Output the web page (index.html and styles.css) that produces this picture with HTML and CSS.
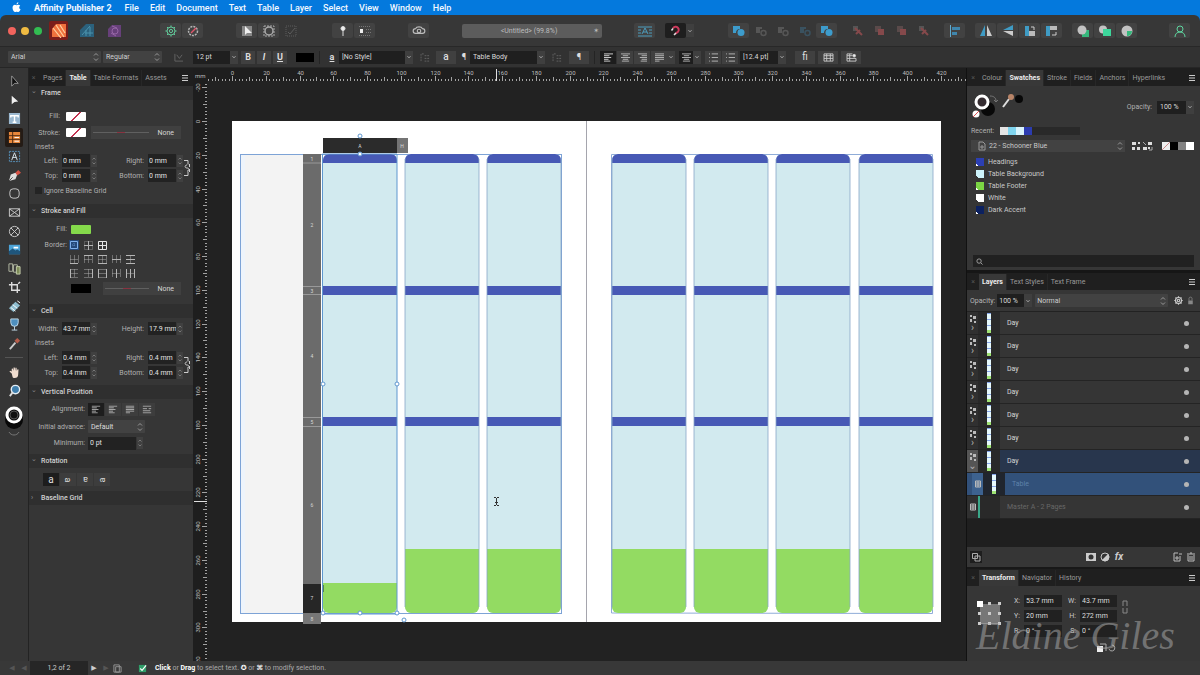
FILE: index.html
```html
<!DOCTYPE html>
<html lang="en">
<head>
<meta charset="utf-8">
<title>Affinity Publisher 2</title>
<link rel="stylesheet" href="styles.css">
</head>
<body>
<svg class="sprite" aria-hidden="true">
  <symbol id="gear" viewBox="0 0 12 12"><circle cx="6" cy="6" r="4"/><circle cx="6" cy="6" r="1.6"/><path d="M6 .4v1.6M6 10v1.6M.4 6H2M10 6h1.6M2 2l1.2 1.2M8.800 8.800 10 10M10 2 8.800 3.200M3.200 8.800 2 10"/></symbol>
  <symbol id="menu" viewBox="0 0 8 8"><path d="M1 1.500h6M1 4h6M1 6.500h6"/></symbol>
  <symbol id="spin" viewBox="0 0 6 10"><path d="M1.500 3.500 3 2l1.500 1.500M1.500 6.500 3 8l1.500-1.500"/></symbol>
  <symbol id="caret" viewBox="0 0 6 6"><path d="M1.500 2.200 3 3.800l1.500-1.600"/></symbol>
  <symbol id="link" viewBox="0 0 7 18"><path d="M0 1.500h4v4M0 16.500h4v-4M3 6c-2.500 0-2.500 3 0 3s2.500 3 0 3M5.500 5v3M5.500 10v3"/></symbol>
  <symbol id="bool" viewBox="0 0 14 12"><path d="M1 1h7v3h-1a4 4 0 0 0-3 4H1z" fill="currentColor"/><circle cx="9" cy="7.500" r="3.500" fill="currentColor"/></symbol>
  <symbol id="boolout" viewBox="0 0 14 12"><path d="M2 2h6v2H6v4H2z" fill="currentColor"/><circle cx="9.500" cy="8" r="2.500" stroke="currentColor" stroke-width="1.500"/></symbol>
  <symbol id="redx" viewBox="0 0 14 12"><path d="M2 1h5v5H2z" fill="#555"/><path d="M4 3l7 7M9 5l-4 4" stroke="currentColor" stroke-width="2"/></symbol>
  <symbol id="redbox" viewBox="0 0 14 12"><path d="M2 1h6v6H2z" fill="#5a4a4a"/><path d="M5 4h6v6H5z" fill="currentColor"/></symbol>
  <symbol id="lines-l" viewBox="0 0 12 10"><path d="M1 1h10M1 3h6M1 5h8M1 7h5M1 9h7"/></symbol>
  <symbol id="lines-c" viewBox="0 0 12 10"><path d="M1 1h10M3 3h6M1 5h10M3 7h6M2 9h8"/></symbol>
  <symbol id="lines-r" viewBox="0 0 12 10"><path d="M1 1h10M5 3h6M3 5h8M5 7h6M4 9h7"/></symbol>
  <symbol id="lines-j" viewBox="0 0 12 10"><path d="M1 1h10M1 3h10M1 5h10M1 7h10M1 9h5"/></symbol>
  <symbol id="lines-w" viewBox="0 0 12 10"><path d="M1 1h10M1 4h5M1 6.500h9M1 9h10M8 4h3"/></symbol>
  <symbol id="list" viewBox="0 0 12 10"><path d="M1 1h1M4 1h7M1 5h1M4 5h7M1 9h1M4 9h7"/></symbol>
  <symbol id="style" viewBox="0 0 12 10"><path d="M1 9V1h3M5 3h6M5 6h6M5 9h6" stroke-dasharray="2 1"/></symbol>
  <symbol id="b-out" viewBox="0 0 10 10"><path d="M1.500 1.500h7v7h-7z"/><path d="M3 5h4M5 3v4" stroke-dasharray="1 1" opacity=".6"/></symbol>
  <symbol id="b-in" viewBox="0 0 10 10"><path d="M5.500 1v9M1 5.500h9"/><path d="M1.500 1.500h8v8h-8z" stroke-dasharray="1 1" opacity=".6"/></symbol>
  <symbol id="b-all" viewBox="0 0 10 10"><path d="M1.500 1.500h8v8h-8zM5.500 1v8M1 5.500h8"/></symbol>
  <symbol id="b-h1" viewBox="0 0 10 10"><path d="M1 9.500h8"/><path d="M1.500 1v8M5.500 1v8M9.500 1v8M1 5.500h8" opacity=".45"/></symbol>
  <symbol id="b-h2" viewBox="0 0 10 10"><path d="M1 1.500h9"/><path d="M1.500 1v8M5.500 1v8M9.500 1v8M1 5.500h8" opacity=".45"/></symbol>
  <symbol id="b-h3" viewBox="0 0 10 10"><path d="M1 1.500h9M1 9.500h9"/><path d="M1.500 1v8M5.500 1v8M9.500 1v8M1 5.500h8" opacity=".45"/></symbol>
  <symbol id="b-h4" viewBox="0 0 10 10"><path d="M1 5.500h9"/><path d="M1.500 1v8M5.500 1v8M9.500 1v8" opacity=".45"/></symbol>
  <symbol id="b-h5" viewBox="0 0 10 10"><path d="M1 1.500h9M1 5.500h9M1 9.500h9"/><path d="M5.500 1v8" opacity=".45"/></symbol>
  <symbol id="b-v1" viewBox="0 0 10 10"><path d="M1.500 1v9"/><path d="M1 1.500h8M1 5.500h8M1 9.500h8M5.500 1v8" opacity=".45"/></symbol>
  <symbol id="b-v2" viewBox="0 0 10 10"><path d="M9.500 1v9"/><path d="M1 1.500h8M1 5.500h8M1 9.500h8M5.500 1v8" opacity=".45"/></symbol>
  <symbol id="b-v3" viewBox="0 0 10 10"><path d="M1.500 1v9M9.500 1v9"/><path d="M1 1.500h8M1 5.500h8M1 9.500h8" opacity=".45"/></symbol>
  <symbol id="b-v4" viewBox="0 0 10 10"><path d="M5.500 1v9"/><path d="M1.500 1v8M9.500 1v8M1 5.500h8" opacity=".45"/></symbol>
  <symbol id="b-v5" viewBox="0 0 10 10"><path d="M1.500 1v9M5.500 1v9M9.500 1v9"/><path d="M1 5.500h8" opacity=".45"/></symbol>
  <symbol id="nodes" viewBox="0 0 8 8"><path d="M1 0h2v2H1zM4 1h3v3H4zM1 4h2v3H1zM5 6h2v2H5z" fill="currentColor" stroke="none"/></symbol>
  <symbol id="grid" viewBox="0 0 8 8"><path d="M1.500 1h5v6h-5zM1.500 3h5M1.500 5h5M4 1v6"/></symbol>
  <symbol id="thumb" viewBox="0 0 6 20"><path d="M1 0h4v20H1z" fill="#e6f9fc"/><path d="M1 0h4v1H1zM1 6h4v1H1zM1 12h4v1H1z" fill="#86a4e8"/><path d="M1 17h4v3H1z" fill="#9fe374"/></symbol>
</svg>

<nav class="menubar" aria-label="Application menu">
  <svg class="apple" viewBox="0 0 10 12"><path d="M7 3c1 0 1.700.5 2.100 1-1.600 1-1.400 3.300.4 4-.5 1.500-1.400 3-2.500 3-.8 0-1-.4-1.900-.4s-1.200.4-1.900.4C1.800 11 .6 8.600.6 6.400.6 4.300 1.900 3 3.200 3c.8 0 1.400.5 1.900.5S6.200 3 7 3zM5 2.700C4.900 1.400 5.900.3 7 .2 7.200 1.500 6.200 2.700 5 2.700z" fill="#fff"/></svg>
  <a class="app" href="#">Affinity Publisher 2</a><a href="#">File</a><a href="#">Edit</a><a href="#">Document</a><a href="#">Text</a><a href="#">Table</a><a href="#">Layer</a><a href="#">Select</a><a href="#">View</a><a href="#">Window</a><a href="#">Help</a>
</nav>

<div class="window">
<header class="toolbar">
  <div class="lights"><button class="light red" aria-label="Close"></button><button class="light yellow" aria-label="Minimise"></button><button class="light green" aria-label="Zoom"></button></div>
  <div class="personas">
    <button class="tb persona on" aria-label="Publisher"><svg viewBox="0 0 14 14"><path d="M0 5 4 0h10v13H0z" fill="#f0713d"/><path d="M1 4l8 10M4 1l8 12M8 1l5 8" stroke="#ffd0a0" stroke-width="1.200"/></svg></button>
    <button class="tb persona" aria-label="Designer"><svg viewBox="0 0 14 14"><path d="M0 6 6 0h8v13H0z" fill="#2b617c"/><path d="M2 11 10 2M6 12V6M10 12V3M5 9h8" stroke="#4a93ad"/></svg></button>
    <button class="tb persona" aria-label="Photo"><svg viewBox="0 0 14 14"><path d="M0 5 4 1h9v12H0z" fill="#67407a"/><circle cx="7" cy="7" r="3" stroke="#9565a5"/><path d="M4 2l5 2M3 9l5 3" stroke="#9565a5"/></svg></button>
  </div>
  <div class="group g1">
    <button class="tb" aria-label="Preferences"><svg viewBox="0 0 12 12" stroke="#62c99a"><use href="#gear"/></svg></button>
    <button class="tb" aria-label="Preflight"><svg viewBox="0 0 12 12" stroke="#b5b5b5"><circle cx="6" cy="6" r="4.500" stroke-dasharray="2 1" stroke-width="1.500"/><path d="M4 8l5-5" stroke="#e0556a" stroke-width="1.500"/></svg></button>
  </div>
  <div class="group g2">
    <button class="tb" aria-label="Baseline grid"><svg viewBox="0 0 12 12"><path d="M1 1h10v10H1z" fill="#888"/><path d="M4 1v9l2-2h5z" fill="#eee"/></svg></button>
    <button class="tb" aria-label="Clip to canvas"><svg viewBox="0 0 12 12" stroke="#aaa"><path d="M1 1h10v10H1z" stroke-dasharray="2 1"/><circle cx="6" cy="6" r="4" stroke-width="1.500"/></svg></button>
    <button class="tb flat" aria-label="Preview"><svg viewBox="0 0 12 12" stroke="#5c5c5c"><path d="M1 1h10v10H1z" stroke-dasharray="1 1"/><path d="M3 7l2 2 5-6"/></svg></button>
  </div>
  <div class="group g3">
    <button class="tb" aria-label="Pin"><svg viewBox="0 0 12 12" stroke="#ddd"><circle cx="6" cy="3.500" r="2" fill="#eee"/><path d="M6 5v6"/></svg></button>
    <button class="tb" aria-label="Text wrap"><svg viewBox="0 0 14 12" stroke="#777"><path d="M1 1.500h12M8 4.500h5M8 7.500h5M1 10.500h12" stroke-dasharray="1 1"/><path d="M2 4h3v4H2z" fill="#eee" stroke="none"/></svg></button>
  </div>
  <button class="tb g4" aria-label="Resource manager"><svg viewBox="0 0 12 10" stroke="#bbb"><path d="M3 7a2 2 0 0 1 0-4c1-2 5-2 6 0a2 2 0 0 1 0 4z"/><circle cx="6" cy="5" r="1.500"/></svg></button>
  <button class="doc-title"><span>&lt;Untitled&gt; (99.8%)</span><i>✶</i></button>
  <button class="tb g5" aria-label="Baseline"><svg viewBox="0 0 14 12" stroke="#4c9dbd"><path d="M0 2h14M0 5h3M11 5h3M0 8h3M11 8h3M0 11h14M4 9l3-6 3 6M5 7h4"/></svg></button>
  <button class="tb black g6" aria-label="Snapping"><svg viewBox="0 0 12 12"><path d="M3 3.500a3 3 0 1 1 4 4L5 9" stroke="#cc3a5c" stroke-width="2"/><path d="M1.500 5.500 3 3.500M4 10l2-2" stroke="#ddd" stroke-width="1.500"/></svg></button><button class="drop" aria-label="Snapping options"><svg viewBox="0 0 6 6" stroke="#aaa"><use href="#caret"/></svg></button>
  <div class="group g7">
    <button class="tb blue" aria-label="Add"><svg viewBox="0 0 14 12"><use href="#bool"/></svg></button>
    <button class="tb flat" aria-label="Subtract"><svg viewBox="0 0 14 12"><use href="#boolout"/></svg></button>
    <button class="tb flat" aria-label="Intersect"><svg viewBox="0 0 14 12"><use href="#boolout"/></svg></button>
    <button class="tb flat dimblue" aria-label="Divide"><svg viewBox="0 0 14 12"><use href="#boolout"/></svg></button>
    <button class="tb blue" aria-label="Combine"><svg viewBox="0 0 14 12"><use href="#bool"/></svg></button>
  </div>
  <div class="group g8">
    <button class="tb flat dimred" aria-label="Back"><svg viewBox="0 0 14 12"><use href="#redx"/></svg></button>
    <button class="tb flat dimred" aria-label="Back one"><svg viewBox="0 0 14 12"><use href="#redbox"/></svg></button>
    <button class="tb flat dimred" aria-label="Forward one"><svg viewBox="0 0 14 12"><use href="#redbox"/></svg></button>
    <button class="tb flat dimred" aria-label="Front"><svg viewBox="0 0 14 12"><use href="#redx"/></svg></button>
  </div>
  <button class="tb g9" aria-label="Alignment"><svg viewBox="0 0 12 12"><path d="M1.500 0v12" stroke="#62acd0"/><path d="M3 2h8v3H3zM3 7h5v3H3z" fill="#3f86ad"/></svg></button>
  <div class="group g10">
    <button class="tb" aria-label="Flip horizontal"><svg viewBox="0 0 14 12"><path d="M6 0v11H1z" fill="#3f9bc4"/><path d="M8 0v11h5z" fill="#ccc"/></svg></button>
    <button class="tb" aria-label="Flip vertical"><svg viewBox="0 0 14 12"><path d="M12 0v5H2z" fill="#3f9bc4"/><path d="M12 11V6H2z" fill="#ccc"/></svg></button>
    <button class="tb" aria-label="Rotate left"><svg viewBox="0 0 14 12"><path d="M2 1h4v10H2z" fill="#3f9bc4"/><path d="M6 6h6v5H6z" fill="#bbb"/><path d="M8 2h3v3" stroke="#ccc"/></svg></button>
    <button class="tb" aria-label="Rotate right"><svg viewBox="0 0 14 12"><path d="M1 1h4v10H1z" fill="#3f9bc4"/><path d="M5 1h7v4H5z" fill="#bbb"/><path d="M7 10h4V7" stroke="#ccc"/></svg></button>
  </div>
  <div class="group g11">
    <button class="tb" aria-label="Insert behind"><svg viewBox="0 0 14 12"><path d="M6 5h7v7H6z" fill="#35b87c"/><circle cx="6" cy="5" r="4.500" fill="#c2c2c2"/></svg></button>
    <button class="tb" aria-label="Insert in front"><svg viewBox="0 0 14 12"><circle cx="5" cy="4.500" r="4" fill="#c2c2c2"/><path d="M5 4h8v7H5z" fill="#3dd69b"/></svg></button>
    <button class="tb" aria-label="Insert inside"><svg viewBox="0 0 14 12"><circle cx="7" cy="6" r="5.500" fill="#c2c2c2"/><path d="M7 6h5c0 3-2 5-5 5z" fill="#35b87c"/></svg></button>
  </div>
  <button class="tb account" aria-label="Account"><svg viewBox="0 0 12 12" stroke="#5fd6a0"><circle cx="6" cy="4" r="3"/><path d="M1 12c0-3 2-5 5-5s5 2 5 5"/></svg></button>
</header>

<div class="contextbar">
  <select class="pick font" aria-label="Font"><option>Arial</option></select>
  <select class="pick weight" aria-label="Font style"><option>Regular</option></select>
  <button class="cb bare c1" aria-label="Text frame"><svg viewBox="0 0 12 10" stroke="#666"><path d="M2 1v8h9M4 2l3 4 3-4"/></svg></button>
  <input class="dark size" aria-label="Font size" value="12 pt"><button class="drop" aria-label="Sizes"><svg viewBox="0 0 6 6" stroke="#aaa"><use href="#caret"/></svg></button>
  <button class="cb bold">B</button><button class="cb italic">I</button><button class="cb under">U</button>
  <button class="blackswatch" aria-label="Text colour"></button>
  <span class="rule"></span>
  <button class="cb bare under c3">a</button>
  <input class="dark nostyle" aria-label="Character style" value="[No Style]"><button class="drop" aria-label="Character styles"><svg viewBox="0 0 6 6" stroke="#aaa"><use href="#caret"/></svg></button>
  <button class="cb bare c4" aria-label="Update style"><svg viewBox="0 0 12 10" stroke="#666"><use href="#style"/></svg></button>
  <button class="cb wide c5">a</button>
  <button class="cb bare c6">¶</button>
  <input class="dark body" aria-label="Paragraph style" value="Table Body"><button class="drop" aria-label="Paragraph styles"><svg viewBox="0 0 6 6" stroke="#aaa"><use href="#caret"/></svg></button>
  <button class="cb bare c4" aria-label="Update paragraph style"><svg viewBox="0 0 12 10" stroke="#666"><use href="#style"/></svg></button>
  <button class="cb wide c7">¶</button>
  <span class="rule"></span>
  <div class="aligns">
    <button class="cb pressed" aria-label="Align left"><svg viewBox="0 0 12 10" stroke="#ddd"><use href="#lines-l"/></svg></button>
    <button class="cb" aria-label="Align centre"><svg viewBox="0 0 12 10" stroke="#bbb"><use href="#lines-c"/></svg></button>
    <button class="cb" aria-label="Align right"><svg viewBox="0 0 12 10" stroke="#bbb"><use href="#lines-r"/></svg></button>
    <button class="cb" aria-label="Justify"><svg viewBox="0 0 12 10" stroke="#bbb"><use href="#lines-j"/></svg></button>
  </div>
  <button class="drop" aria-label="Justify options"><svg viewBox="0 0 6 6" stroke="#aaa"><use href="#caret"/></svg></button>
  <button class="cb pressed c8" aria-label="Vertical align"><svg viewBox="0 0 12 10" stroke="#bbb"><use href="#lines-c"/></svg></button><button class="drop" aria-label="Vertical options"><svg viewBox="0 0 6 6" stroke="#aaa"><use href="#caret"/></svg></button>
  <div class="aligns c9">
    <button class="cb" aria-label="Bullets"><svg viewBox="0 0 12 10" stroke="#bbb"><use href="#list"/></svg></button>
    <button class="cb" aria-label="Numbering"><svg viewBox="0 0 12 10" stroke="#bbb"><use href="#list"/></svg></button>
  </div>
  <input class="dark leading" aria-label="Leading" value="[12.4 pt]"><button class="drop" aria-label="Leading options"><svg viewBox="0 0 6 6" stroke="#aaa"><use href="#caret"/></svg></button>
  <button class="cb wide c10">fi</button>
  <button class="cb wide c11" aria-label="Table"><svg viewBox="0 0 12 10" stroke="#ccc"><path d="M1 1h10v8H1zM1 3h10M1 6h10M4 1v8M8 1v8"/></svg></button>
  <button class="cb wide c11" aria-label="Table settings"><svg viewBox="0 0 12 10" stroke="#ccc"><path d="M7 1H1v8h10V6M1 3h6M1 6h10M4 1v8"/><circle cx="9" cy="3" r="1.500" fill="#eee"/></svg></button>
</div>

<main class="workspace">
<aside class="tools" aria-label="Tools">
  <div class="toolset">
  <button aria-label="Move"><svg viewBox="0 0 14 14"><path d="M4 1v11l3-3h4z" fill="#111" stroke="#999"/></svg></button>
  <button aria-label="Node"><svg viewBox="0 0 14 14"><path d="M4 2v9l3-2.500 4-.5z" fill="#eee"/></svg></button>
  <button aria-label="Frame text"><svg viewBox="0 0 14 14"><path d="M1 1h12v12H1z" fill="#9bb8cf"/><path d="M3 6V4h8v2M7 4v7M5 11h4" stroke="#fff" stroke-width="1.500"/></svg></button>
  <button class="active" aria-label="Table tool"><svg viewBox="0 0 14 14"><path d="M1 1h12v12H1z" fill="#e8873a"/><path d="M1 5h12M1 9h12M5 1v12" stroke="#4a2a14"/><path d="M7 7h5M7 11h5" stroke="#fff"/></svg></button>
  <button aria-label="Artistic text"><svg viewBox="0 0 14 14" stroke="#5794bf"><path d="M1.500 1.500h11v11h-11z" stroke-dasharray="2 1"/><path d="M4 11 7 3l3 8M5 8h4" stroke="#d9e6ee"/></svg></button>
  <button aria-label="Pen"><svg viewBox="0 0 14 14"><path d="M1 13 3 6l5-2 2 2-2 5z" fill="#ddd"/><path d="m8 4 3-3 3 3-4 3z" fill="#d65245"/><path d="m1 13 4-4" stroke="#444"/></svg></button>
  <button aria-label="Rounded rectangle"><svg viewBox="0 0 14 14" stroke="#ccc"><rect x="2" y="2" width="10" height="10" rx="3.500"/></svg></button>
  <button aria-label="Picture frame rectangle"><svg viewBox="0 0 14 14" stroke="#ccc"><path d="M1.500 3h11v8h-11zM1.500 3l11 8M12.500 3l-11 8"/></svg></button>
  <button aria-label="Picture frame ellipse"><svg viewBox="0 0 14 14" stroke="#ccc"><circle cx="7" cy="7" r="5.500"/><path d="m3 3 8 8M11 3l-8 8"/></svg></button>
  <button aria-label="Place image"><svg viewBox="0 0 14 14"><path d="M1 2h12v10H1z" fill="#4ba3d8"/><path d="M1 9l4-3 3 2 2-1 3 2v3H1z" fill="#1f567c"/><path d="M6 5h5" stroke="#fff" stroke-width="2"/></svg></button>
  <button aria-label="Data merge"><svg viewBox="0 0 14 14"><path d="M1 2h4v8H1zM6 3h4v8H6z" stroke="#b5bba5"/><path d="M9 5h4v8H9z" fill="#7d8b57" stroke="#c7cfae"/></svg></button>
  <button aria-label="Crop"><svg viewBox="0 0 14 14" stroke="#ddd" stroke-width="1.500"><path d="M4 1v9h9M1 4h9v9M11 3l2-2"/></svg></button>
  <button aria-label="Fill"><svg viewBox="0 0 14 14"><path d="m1 9 7-7 5 4-7 7z" fill="#8fbdcf"/><path d="m3 8 5 4M5 5l5 4M10 1l3 2" stroke="#fff"/></svg></button>
  <button aria-label="Transparency"><svg viewBox="0 0 14 14"><path d="M3 1h8v4a4 4 0 0 1-8 0z" fill="#4e8fbe"/><path d="M3 1h8v4a4 4 0 0 1-8 0zM7 9v4M4 13h6" stroke="#c3dbe9"/></svg></button>
  <button aria-label="Colour picker"><svg viewBox="0 0 14 14"><path d="m2 13 6-7" stroke="#ccc" stroke-width="2"/><path d="m7 4 3-3 3 3-3 3z" fill="#b55d4b"/></svg></button>
  </div>
  <hr>
  <button aria-label="Hand"><svg viewBox="0 0 14 14"><path d="M4 8 1.500 6l1-1L4 6V3l1.200-.2L6 5V1.500h1.200L8 5V2h1.200l.3 3.500.8-2 1 .3L11 9c0 3-1.500 4-4 4S5 11 4 8z" fill="#f0ddd0"/></svg></button>
  <button aria-label="Zoom tool"><svg viewBox="0 0 14 14"><circle cx="8" cy="6" r="4.500" fill="#3f7fae" stroke="#e5eef5" stroke-width="1.500"/><path d="m5 9-3 4" stroke="#ddd" stroke-width="2"/></svg></button>
  <svg class="stroke-fill" viewBox="0 0 20 34"><circle cx="10" cy="16" r="9" fill="#080808"/><circle cx="10" cy="11" r="7" fill="#111" stroke="#fff" stroke-width="3"/><circle cx="10" cy="11" r="4" stroke="#555"/><path d="M5 28c2 4 8 4 10 0" stroke="#777"/></svg>
</aside>

<aside class="panel left">
  <div class="tabs"><span class="grip">×</span><button class="tab">Pages</button><button class="tab on">Table</button><button class="tab">Table Formats</button><button class="tab">Assets</button><button class="burger" aria-label="Panel menu"><svg viewBox="0 0 8 8"><use href="#menu"/></svg></button></div>

  <h2>Frame</h2>
  <section class="frame">
    <div class="row r16"><span class="lab">Fill:</span><button class="nofill" aria-label="No fill"></button></div>
    <div class="row r17"><span class="lab">Stroke:</span><button class="nofill" aria-label="No stroke"></button><button class="strokebox"><i></i>None</button></div>
    <p class="sub r12">Insets</p>
    <div class="insets">
      <label for="fl">Left:</label><input id="fl" value="0 mm"><svg class="spin" viewBox="0 0 6 10"><use href="#spin"/></svg>
      <label for="fr">Right:</label><input id="fr" value="0 mm"><svg class="spin" viewBox="0 0 6 10"><use href="#spin"/></svg>
      <label for="ft">Top:</label><input id="ft" value="0 mm"><svg class="spin" viewBox="0 0 6 10"><use href="#spin"/></svg>
      <label for="fb">Bottom:</label><input id="fb" value="0 mm"><svg class="spin" viewBox="0 0 6 10"><use href="#spin"/></svg>
      <svg class="chain" viewBox="0 0 7 18"><use href="#link"/></svg>
    </div>
    <label class="check"><input type="checkbox">Ignore Baseline Grid</label>
  </section>

  <h2>Stroke and Fill</h2>
  <section class="strokefill">
    <div class="row r18"><span class="lab">Fill:</span><button class="greenfill" aria-label="Green fill"></button></div>
    <div class="row r14"><span class="lab">Border:</span><div class="borders"><button class="on" aria-label="Outside"><svg viewBox="0 0 10 10"><use href="#b-out"/></svg></button><button aria-label="Inside"><svg viewBox="0 0 10 10"><use href="#b-in"/></svg></button><button class="lit" aria-label="All"><svg viewBox="0 0 10 10"><use href="#b-all"/></svg></button></div></div>
    <div class="row r14"><span class="lab"></span><div class="borders"><button aria-label="Bottom edge"><svg viewBox="0 0 10 10"><use href="#b-h1"/></svg></button><button aria-label="Top edge"><svg viewBox="0 0 10 10"><use href="#b-h2"/></svg></button><button aria-label="Top and bottom"><svg viewBox="0 0 10 10"><use href="#b-h3"/></svg></button><button aria-label="Middle row"><svg viewBox="0 0 10 10"><use href="#b-h4"/></svg></button><button aria-label="All rows"><svg viewBox="0 0 10 10"><use href="#b-h5"/></svg></button></div></div>
    <div class="row r14"><span class="lab"></span><div class="borders"><button aria-label="Left edge"><svg viewBox="0 0 10 10"><use href="#b-v1"/></svg></button><button aria-label="Right edge"><svg viewBox="0 0 10 10"><use href="#b-v2"/></svg></button><button aria-label="Left and right"><svg viewBox="0 0 10 10"><use href="#b-v3"/></svg></button><button aria-label="Middle column"><svg viewBox="0 0 10 10"><use href="#b-v4"/></svg></button><button aria-label="All columns"><svg viewBox="0 0 10 10"><use href="#b-v5"/></svg></button></div></div>
    <div class="row r17"><span class="lab"></span><button class="blackfill" aria-label="Stroke colour"></button><button class="strokebox narrow"><i></i>None</button></div>
  </section>

  <h2>Cell</h2>
  <section class="cell">
    <div class="insets">
      <label for="cw">Width:</label><input id="cw" value="43.7 mm"><svg class="spin" viewBox="0 0 6 10"><use href="#spin"/></svg>
      <label for="ch">Height:</label><input id="ch" value="17.9 mm"><svg class="spin" viewBox="0 0 6 10"><use href="#spin"/></svg>
    </div>
    <p class="sub r14">Insets</p>
    <div class="insets">
      <label for="cl">Left:</label><input id="cl" value="0.4 mm"><svg class="spin" viewBox="0 0 6 10"><use href="#spin"/></svg>
      <label for="cr">Right:</label><input id="cr" value="0.4 mm"><svg class="spin" viewBox="0 0 6 10"><use href="#spin"/></svg>
      <label for="ct">Top:</label><input id="ct" value="0.4 mm"><svg class="spin" viewBox="0 0 6 10"><use href="#spin"/></svg>
      <label for="cb">Bottom:</label><input id="cb" value="0.4 mm"><svg class="spin" viewBox="0 0 6 10"><use href="#spin"/></svg>
      <svg class="chain" viewBox="0 0 7 18"><use href="#link"/></svg>
    </div>
  </section>

  <h2>Vertical Position</h2>
  <section class="vertical">
    <div class="row r18"><span class="lab">Alignment:</span><div class="four"><button class="pressed" aria-label="Top"><svg viewBox="0 0 12 10"><use href="#lines-l"/></svg></button><button aria-label="Centre"><svg viewBox="0 0 12 10"><use href="#lines-l"/></svg></button><button aria-label="Bottom"><svg viewBox="0 0 12 10"><use href="#lines-j"/></svg></button><button aria-label="Justified"><svg viewBox="0 0 12 10"><use href="#lines-w"/></svg></button></div></div>
    <div class="row r17"><label class="lab" for="adv">Initial advance:</label><select id="adv" class="pick adv"><option>Default</option></select></div>
    <div class="row r16"><label class="lab" for="min">Minimum:</label><input id="min" value="0 pt"><svg class="spin" viewBox="0 0 6 10"><use href="#spin"/></svg></div>
  </section>

  <h2>Rotation</h2>
  <section class="rotation"><button class="pressed">a</button><button><span class="q1">a</span></button><button><span class="q2">a</span></button><button><span class="q3">a</span></button></section>

  <h2 class="closed">Baseline Grid</h2>
</aside>

<section class="view" aria-label="Document">
  <svg class="ruler-h" id="rulerH"><text class="unit" x="2" y="10">mm</text></svg>
  <svg class="ruler-v" id="rulerV"></svg>
  <svg class="canvas">
    <defs>
      <clipPath id="round"><rect x="0" y="0" width="74" height="459" rx="6"/></clipPath>
      <g id="col"><g clip-path="url(#round)"><rect width="74" height="459" fill="#d2eaef"/><rect width="74" height="9" fill="#4759b5"/><rect y="132" width="74" height="9" fill="#4759b5"/><rect y="263" width="74" height="9" fill="#4759b5"/></g></g>
      <g id="day"><use href="#col"/><rect y="395" width="74" height="64" fill="#93db62" clip-path="url(#round)"/><path d="M0 5v448M74 5v448" stroke="#88a6c8" stroke-width=".8"/></g>
    </defs>
    <g transform="translate(-207 -81)">
      <rect x="232" y="121" width="709" height="501" fill="#fff"/>
      <path d="M586.500 121v501" stroke="#a5a5ad"/>
      <rect x="240.500" y="154.500" width="321" height="459" stroke="#7da3d6"/>
      <rect x="241" y="155" width="62" height="458" fill="#eef4fb"/>
      <rect x="245" y="155" width="58" height="458" fill="#f3f3f3"/>
      <path d="M611.500 613V154.500h321V613.500z" stroke="#8facd8"/>
      <g transform="translate(323 154)"><use href="#col"/><rect y="429" width="74" height="30" fill="#93db62" clip-path="url(#round)"/></g>
      <path d="M322.500 154h74.500v460h-74.500z" stroke="#5f97cf"/>
      <use href="#day" x="405" y="154"/><use href="#day" x="487" y="154"/>
      <use href="#day" x="612" y="154"/><use href="#day" x="694" y="154"/><use href="#day" x="776" y="154"/><use href="#day" x="859" y="154"/>
      <rect x="303" y="154" width="18" height="470" fill="#6b6b6b"/>
      <rect x="303" y="584" width="18" height="29" fill="#262626"/>
      <path d="M303 163h18M303 286.500h18M303 294.500h18M303 417.500h18M303 426.500h18" stroke="#a5a5a5" stroke-width=".8"/>
      <rect x="303" y="613" width="18" height="11" fill="#777"/>
      <rect x="323" y="138" width="74" height="15" fill="#2b2b2b"/>
      <rect x="397" y="138" width="11" height="15" fill="#747474"/>
      <g class="marks"><text x="360" y="148">A</text><text x="402" y="148">H</text><text x="312" y="161">1</text><text x="312" y="227">2</text><text x="312" y="293">3</text><text x="312" y="358">4</text><text x="312" y="424">5</text><text x="312" y="507">6</text><text x="312" y="600">7</text><text x="312" y="621">8</text></g>
      <path d="M323.500 585v7" stroke="#4a6a4a" stroke-width=".8"/>
      <g fill="#fff" stroke="#5f97cf"><circle cx="360" cy="136" r="2"/><circle cx="360" cy="154" r="2"/><circle cx="323" cy="384" r="2"/><circle cx="397" cy="384" r="2"/><circle cx="323" cy="613" r="2"/><circle cx="360" cy="613" r="2"/><circle cx="397" cy="613" r="2"/><circle cx="404" cy="620" r="2"/></g>
      <path d="M494 497.500h2M497 497.500h2M494 505.500h2M497 505.500h2M496.500 498v7M495 502.500h3" stroke="#333"/>
    </g>
  </svg>
</section>

<aside class="panel right">
  <div class="tabs"><span class="grip">×</span><button class="tab">Colour</button><button class="tab on">Swatches</button><button class="tab">Stroke</button><button class="tab">Fields</button><button class="tab">Anchors</button><button class="tab">Hyperlinks</button><button class="burger" aria-label="Panel menu"><svg viewBox="0 0 8 8"><use href="#menu"/></svg></button></div>
  <section class="swatches">
    <div class="picker">
      <svg viewBox="3 0 56 28"><circle cx="20" cy="16" r="7" fill="#080808"/><circle cx="14" cy="9" r="6" fill="#342c30" stroke="#fff" stroke-width="3"/><circle cx="8" cy="21" r="3.500" fill="#fff"/><path d="m5 24 6-6" stroke="#d55"/><path d="M22 3c4 0 6 2 6 5M26 7l2 2 2-2" stroke="#777"/><path d="m35 14 6-8" stroke="#ddd" stroke-width="2"/><circle cx="43" cy="4" r="3" fill="#b88468"/><circle cx="51" cy="6" r="4" fill="#080808"/></svg>
      <label class="grow-label" for="sop">Opacity:</label><input id="sop" class="dark op" value="100 %"><button class="drop" aria-label="Opacity options"><svg viewBox="0 0 6 6" stroke="#aaa"><use href="#caret"/></svg></button>
    </div>
    <div class="recent"><span>Recent:</span><i class="k-grey"></i><i class="k-cyan"></i><i class="k-pale"></i><i class="k-blue"></i><b></b></div>
    <div class="palette">
      <div class="palette-pick"><svg viewBox="0 0 8 10" stroke="#999"><path d="M1 1h4l2 2v6H1zM3 5h2v2H3z"/></svg><select class="pick" aria-label="Palette"><option>22 - Schooner Blue</option></select></div>
      <svg class="views" viewBox="0 0 22 10"><path d="M1 1h4v3H1zM7 1h2v2H7zM1 6h3v3H1zM6 6h3v3H6zM17 1h4v3h-4zM12 6h4v3h-4zM17 6h2v2h-2z" fill="#ddd"/><path d="m12 1 3 3M18 9h3V6" stroke="#aaa"/></svg>
      <div class="basic"><i class="k-none"></i><i class="k-black"></i><i class="k-mid"></i><i class="k-white"></i></div>
    </div>
    <ul class="names">
      <li><i class="n1"></i>Headings</li><li><i class="n2"></i>Table Background</li><li><i class="n3"></i>Table Footer</li><li><i class="n4"></i>White</li><li><i class="n5"></i>Dark Accent</li>
    </ul>
    <label class="search"><svg viewBox="0 0 8 8" stroke="#aaa"><circle cx="3.500" cy="3.500" r="2.500"/><path d="m5.500 5.500 2 2"/></svg><input type="search" aria-label="Search swatches"></label>
  </section>

  <div class="tabs layers-tabs"><span class="grip">×</span><button class="tab on">Layers</button><button class="tab">Text Styles</button><button class="tab">Text Frame</button><button class="burger" aria-label="Panel menu"><svg viewBox="0 0 8 8"><use href="#menu"/></svg></button></div>
  <div class="layer-opts"><label for="lop">Opacity:</label><input id="lop" class="dark" value="100 %"><button class="drop" aria-label="Opacity options"><svg viewBox="0 0 6 6" stroke="#aaa"><use href="#caret"/></svg></button><select class="pick" aria-label="Blend mode"><option>Normal</option></select><button class="ico" aria-label="Blend options"><svg viewBox="0 0 12 12" stroke="#ccc" stroke-width="1.500"><use href="#gear"/></svg></button><button class="ico" aria-label="Lock"><svg viewBox="0 0 12 12"><path d="M3 6h6v5H3z" fill="#888"/><path d="M4 6V3c0-2 4-2 4 0v3" stroke="#888"/></svg></button></div>
  <ul class="layers">
    <li><span class="kind"><svg viewBox="0 0 8 8"><use href="#nodes"/></svg>›</span><svg class="thumb" viewBox="0 0 6 20"><use href="#thumb"/></svg><span class="name">Day</span><i></i></li>
    <li><span class="kind"><svg viewBox="0 0 8 8"><use href="#nodes"/></svg>›</span><svg class="thumb" viewBox="0 0 6 20"><use href="#thumb"/></svg><span class="name">Day</span><i></i></li>
    <li><span class="kind"><svg viewBox="0 0 8 8"><use href="#nodes"/></svg>›</span><svg class="thumb" viewBox="0 0 6 20"><use href="#thumb"/></svg><span class="name">Day</span><i></i></li>
    <li><span class="kind"><svg viewBox="0 0 8 8"><use href="#nodes"/></svg>›</span><svg class="thumb" viewBox="0 0 6 20"><use href="#thumb"/></svg><span class="name">Day</span><i></i></li>
    <li><span class="kind"><svg viewBox="0 0 8 8"><use href="#nodes"/></svg>›</span><svg class="thumb" viewBox="0 0 6 20"><use href="#thumb"/></svg><span class="name">Day</span><i></i></li>
    <li><span class="kind"><svg viewBox="0 0 8 8"><use href="#nodes"/></svg>›</span><svg class="thumb" viewBox="0 0 6 20"><use href="#thumb"/></svg><span class="name">Day</span><i></i></li>
    <li class="parent"><span class="kind"><svg viewBox="0 0 8 8"><use href="#nodes"/></svg>⌄</span><svg class="thumb" viewBox="0 0 6 20"><use href="#thumb"/></svg><span class="name">Day</span><i></i></li>
    <li class="selected"><span class="kind"><svg viewBox="0 0 8 8"><use href="#grid"/></svg></span><svg class="thumb" viewBox="0 0 6 20"><use href="#thumb"/></svg><span class="name">Table</span><i></i></li>
    <li class="master"><span class="kind"><svg viewBox="0 0 8 8"><use href="#grid"/></svg></span><span class="thumb"></span><span class="name">Master A - 2 Pages</span><i></i></li>
  </ul>
  <div class="layer-space"></div>
  <div class="layer-bar">
    <button class="black" aria-label="Edit all layers"><svg viewBox="0 0 10 10" stroke="#aaa"><path d="M1.500 1.500h5v5h-5zM4 4h5v5H4z"/></svg></button>
    <span class="push"></span>
    <button aria-label="Mask"><svg viewBox="0 0 10 10"><path d="M0 1h10v8H0z" fill="#ccc"/><circle cx="5" cy="5" r="2.500" fill="#333"/></svg></button>
    <button aria-label="Adjustment"><svg viewBox="0 0 10 10"><circle cx="5" cy="5" r="4" stroke="#ccc"/><path d="M8 2a4 4 0 0 1-6 6z" fill="#ccc"/></svg></button>
    <button class="fx">fx</button>
    <button class="add" aria-label="Add layer"><svg viewBox="0 0 10 10" stroke="#bbb"><path d="M6 1H2v8h6V4M7 2h3M4 5h2v2H4z"/></svg></button>
    <button aria-label="Delete"><svg viewBox="0 0 10 10" stroke="#bbb"><path d="M1 2h8M4 1h2M2 3v6h6V3M4 4v4M6 4v4"/></svg></button>
  </div>

  <div class="tabs transform-tabs"><span class="grip">×</span><button class="tab on">Transform</button><button class="tab">Navigator</button><button class="tab">History</button><button class="burger" aria-label="Panel menu"><svg viewBox="0 0 8 8"><use href="#menu"/></svg></button></div>
  <section class="transform">
    <svg class="anchor" viewBox="0 0 28 30"><path d="M4 4h20v20H4z" fill="#777"/><path d="M1 1h6v6H1zM12 2h3v3h-3zM22 2h3v3h-3zM2 12h3v3H2zM12 12h3v3h-3zM22 12h3v3h-3zM2 22h3v3H2zM12 22h3v3h-3zM22 22h3v3h-3z" fill="#ccc"/><path d="M1 1h6v6H1z" fill="#fff"/></svg>
    <div class="coords">
      <label for="tx">X:</label><input id="tx" value="53.7 mm"><label for="tw">W:</label><input id="tw" value="43.7 mm">
      <label for="ty">Y:</label><input id="ty" value="20 mm"><label for="th">H:</label><input id="th" value="272 mm">
      <label for="tr">R:</label><input id="tr" value="0 °"><label for="ts">S:</label><input id="ts" value="0 °">
    </div>
    <svg class="lock" viewBox="0 0 6 14" stroke="#888"><path d="M1 6V1h4v5M1 8v5h4V8"/></svg>
    <svg class="cycle" viewBox="0 0 20 10"><path d="M0 3h6v6H0z" fill="#eee"/><path d="M3 1h6v7M12 6a3 3 0 1 0 3-4" stroke="#aaa"/></svg>
    <p class="watermark">Elaine Giles</p>
  </section>
</aside>
</main>

<footer class="status">
  <button class="nav dimmed" aria-label="First page">◀</button><button class="nav dimmed" aria-label="Previous page">◀</button>
  <button class="pages">1,2 of 2</button>
  <button class="nav" aria-label="Next page">▶</button><button class="nav dimmed" aria-label="Last page">▶</button>
  <svg class="st" viewBox="0 0 10 10" stroke="#999"><path d="M1 1h6v8H1zM3 3h6v6H3z"/></svg>
  <svg class="st ok" viewBox="0 0 10 10"><path d="M1 1h8v8H1z" fill="#2f9c68"/><path d="m2.500 5 2 2L9 1.500" stroke="#fff" stroke-width="1.300"/></svg>
  <p><b>Click</b> or <b>Drag</b> to select text. <b>✪</b> or <b>⌘</b> to modify selection.</p>
</footer>
</div>
<script src="rulers.js"></script>
</body>
</html>
```

FILE: styles.css
```css
* { box-sizing: border-box; }
html, body { height: 100%; }
body {
  margin: 0;
  display: flex;
  flex-direction: column;
  background: #0479dd;
  color: #c8c8c8;
  font: 7px/10px Roboto, "DejaVu Sans", sans-serif;
  overflow: hidden;
}
svg { fill: none; flex: none; display: block; }
button, input, select {
  font: inherit;
  color: inherit;
  border: 0;
  margin: 0;
  padding: 0;
  background: none;
  appearance: none;
  min-width: 0;
  border-radius: 0;
}
button { display: flex; align-items: center; justify-content: center; flex: none; }
h2, p, ul { margin: 0; padding: 0; font: inherit; list-style: none; }
.sprite { position: absolute; width: 0; height: 0; }

.menubar { display: flex; align-items: center; height: 15px; flex: none; gap: 11px; padding-left: 12px; font-size: 9px; font-weight: 500; }
.menubar a { color: #f2f8ff; text-decoration: none; }
.menubar .app { font-weight: 700; margin: 0 2px; }
.apple { width: 9px; height: 11px; }

.window { flex: 1; min-height: 0; display: flex; flex-direction: column; background: #373737; border-radius: 6px 6px 0 0; overflow: hidden; }

.toolbar { display: flex; align-items: center; height: 32px; flex: none; padding-right: 10px; border-bottom: 1px solid #282828; }
.lights { display: flex; gap: 4px; margin-left: 8px; }
.light { width: 8px; height: 8px; border-radius: 50%; margin-right: 1px; }
.red { background: #f2645d; }
.yellow { background: #f0bb42; }
.green { background: #32bd52; }
.personas { display: flex; gap: 9px; margin-left: 6px; }
.tb { width: 21px; height: 15px; background: #424242; border-radius: 2px; }
.tb svg { width: 14px; height: 12px; }
.persona { width: 19px; height: 19px; background: none; }
.persona.on { background: #7c1d1a; }
.persona svg { width: 14px; height: 14px; }
.group { display: flex; gap: 1px; }
.flat { background: none; color: #565656; }
.black, .tb.black { background: #1e1e1e; }
.blue { color: #3d9ccc; }
.dimblue { color: #3a5260; }
.dimred { color: #85494b; }
.g1 { margin-left: 36px; }
.g2 { margin-left: 33px; }
.g3 { margin-left: 31px; }
.g4 { margin-left: 33px; }
.doc-title { width: 140px; height: 14px; margin-left: 33px; background: #5c5c5c; border-radius: 2px; color: #bcbcbc; padding: 0 3px; }
.doc-title span { flex: 1; }
.doc-title i { font-style: normal; }
.g5 { margin-left: 32px; }
.g6 { margin-left: 10px; }
.g7 { margin-left: 34px; }
.g8 { margin-left: 10px; }
.g9 { margin-left: 10px; }
.g10 { margin-left: 10px; }
.g11 { margin-left: 10px; }
.account { margin-left: auto; }
.drop { width: 8px; height: 13px; background: #3f3f3f; }
.drop svg { width: 6px; height: 6px; }

.contextbar { display: flex; align-items: center; height: 21px; flex: none; padding-left: 8px; background: #323232; border-bottom: 1px solid #262626; color: #d0d0d0; }
.pick {
  background: #424242 url("data:image/svg+xml,%3Csvg xmlns='http://www.w3.org/2000/svg' width='6' height='10' fill='none' stroke='%23999'%3E%3Cpath d='M1 3.500 3 1.500l2 2M1 6.500l2 2 2-2'/%3E%3C/svg%3E") no-repeat right 2px center;
  height: 12px;
  padding-left: 3px;
  border-radius: 1px;
}
.font { width: 93px; }
.weight { width: 59px; margin-left: 2px; }
.dark { background: #1f1f1f; height: 13px; padding-left: 3px; color: #dadada; }
.size { width: 37px; }
.cb { width: 14px; height: 13px; background: #404040; margin-left: 2px; font-size: 9px; color: #ddd; }
.cb svg { width: 11px; height: 9px; }
.bare { background: none; }
.pressed, .cb.pressed { background: #1d1d1d; }
.wide { width: 20px; }
.bold { font-weight: 700; margin-left: 3px; }
.italic { font-style: italic; font-weight: 700; }
.under { text-decoration: underline; font-weight: 700; }
.c1 { margin: 0 8px 0 9px; }
.blackswatch { width: 18px; height: 9px; background: #000; margin-left: 9px; }
.rule { width: 1px; height: 13px; background: #242424; margin: 0 5px; }
.c3 { width: 14px; margin-left: 0; }
.nostyle { width: 66px; }
.c4 { margin-left: 5px; }
.c5 { margin-left: 4px; font-size: 10px; font-weight: 500; }
.c6 { width: 12px; }
.body { width: 67px; }
.c7 { margin-left: 5px; }
.aligns { display: flex; gap: 1px; }
.aligns .cb { width: 16px; margin-left: 0; }
.c8 { margin-left: 4px; }
.c9 { margin-left: 4px; }
.leading { width: 38px; margin-left: 2px; }
.c10 { margin-left: 9px; font-size: 10px; }
.c11 { margin-left: 3px; }

.workspace { flex: 1; min-height: 0; display: flex; background: #1b1b1b; }

.tools { width: 28px; flex: none; background: #363636; display: flex; flex-direction: column; align-items: center; padding-top: 4px; }
.toolset { display: flex; flex-direction: column; height: 281px; flex: none; }
.toolset button { flex: 1; }
.tools button { width: 18px; min-height: 18px; border-radius: 2px; }
.tools button svg { width: 13px; height: 13px; }
.tools .active { background: #241b15; }
.tools hr { width: 18px; border: 0; border-top: 1px solid #555; margin: 4px 0 5px; }
.stroke-fill { width: 20px; height: 34px; margin-top: 5px; }

.panel { background: #363636; display: flex; flex-direction: column; flex: none; }
.left { width: 165px; border-left: 1px solid #232323; }
.right { width: 233px; }
.tabs { display: flex; height: 18px; flex: none; background: #1f1f1f; padding-top: 2px; color: #9a9a9a; }
.grip { width: 9px; color: #555; text-align: center; line-height: 16px; flex: none; }
.tab { padding: 0 3px; height: 16px; }
.tab.on { background: #383838; color: #ececec; font-weight: 700; }
.tab + .tab { border-left: 1px solid #272727; }
.burger { margin-left: auto; width: 17px; }
.burger svg { width: 8px; height: 8px; stroke: #ccc; }
.left .tab:first-of-type { margin-left: 2px; }

h2 { height: 14px; flex: none; background: #2f2f2f; padding-left: 12px; line-height: 14px; color: #d2d2d2; position: relative; font-weight: 500; }
h2::before { content: "⌄"; position: absolute; left: 2px; top: -2px; color: #888; }
h2.closed::before { content: "›"; top: 0; }
.row { display: flex; align-items: center; }
.r12 { height: 12px; line-height: 12px; }
.r14 { height: 14px; line-height: 14px; }
.r16 { height: 16px; }
.r17 { height: 17px; }
.r18 { height: 18px; }
.lab { text-align: right; color: #b0b0b0; flex: none; }
.sub { padding-left: 6px; color: #b0b0b0; }
.frame { padding: 8px 0 6px; }
.frame .lab { width: 31px; margin-right: 6px; }
.nofill { width: 20px; height: 9px; border-radius: 1px; background: linear-gradient(135deg, #fff 47%, #c23350 47%, #c23350 53%, #fff 53%); }
.strokebox { width: 90px; height: 13px; margin-left: 5px; padding: 0 7px 0 2px; background: #404040; color: #d5d5d5; gap: 8px; }
.strokebox i { flex: 1; height: 1px; background: linear-gradient(90deg, #606060 42%, #8a3341 42%, #8a3341 58%, #606060 58%); }
.strokebox.narrow { width: 78px; margin-left: 12px; }
.insets { display: grid; grid-template-columns: 32px 28px 6px 49px 28px 6px 8px; column-gap: 1px; align-items: center; grid-auto-rows: 15px; }
.insets label { text-align: right; color: #b0b0b0; padding-right: 3px; }
.insets input, .vertical input { height: 13px; background: #222; color: #e2e2e2; padding-left: 1px; }
.spin { width: 6px; height: 12px; stroke: #777; background: #404040; }
.chain { grid-column: 7; grid-row: 1 / span 2; width: 7px; height: 18px; stroke: #ccc; }
.check { display: flex; align-items: center; height: 15px; color: #b0b0b0; gap: 2px; padding-left: 6px; }
.check input { width: 7px; height: 7px; background: #242424; }
.strokefill { padding: 2px 0 7px; }
.strokefill .lab { width: 38px; margin-right: 2px; }
.greenfill { width: 20px; height: 9px; background: #85da4b; border-radius: 1px; margin-left: 2px; }
.blackfill { width: 20px; height: 9px; background: #000; margin-left: 2px; }
.borders { display: flex; gap: 4px; stroke: #b5b5b5; }
.borders button { width: 10px; height: 10px; }
.borders svg { width: 10px; height: 10px; }
.borders .on { background: #26497a; stroke: #7fb0ea; }
.borders .lit { stroke: #e5e5e5; }
.cell { padding: 3px 0 5px; }
.vertical { padding: 1px 0 3px; }
.vertical .lab { width: 56px; margin-right: 3px; }
.four { display: flex; gap: 1px; stroke: #bbb; }
.four button { width: 16px; height: 13px; background: #3d3d3d; }
.four .pressed { background: #1d1d1d; }
.four svg { width: 10px; height: 9px; }
.adv { width: 57px; height: 13px; color: #ddd; }
.vertical input { width: 48px; padding-left: 2px; margin-right: 1px; }
.rotation { display: flex; height: 23px; align-items: center; padding-left: 14px; gap: 1px; color: #ddd; font-size: 9px; }
.rotation button { width: 16px; height: 13px; background: #3d3d3d; }
.rotation .pressed { background: #1d1d1d; font-size: 10px; }
.rotation span { display: block; }
.q1 { transform: rotate(90deg); }
.q2 { transform: rotate(180deg); }
.q3 { transform: rotate(270deg); }

.view { flex: 1; min-width: 0; display: grid; grid-template: 13px 1fr / 14px 1fr; background: #222; border-right: 1px solid #111; }
.ruler-h { grid-column: 1 / 3; width: 100%; height: 13px; background: #1e1e1e; }
.ruler-v { width: 14px; height: 100%; background: #1e1e1e; }
.canvas { width: 100%; height: 100%; }
.view text { font-size: 6px; fill: #bdbdbd; }
.tick { stroke: #a2a2a2; stroke-width: 1; }
.marker { stroke: #e0e0e0; }
.view .marks text { font-size: 5px; text-anchor: middle; fill: #d8d8d8; }

.right .tabs .grip { width: 12px; }
.swatches { padding: 4px 6px 3px 4px; height: 184px; flex: none; display: flex; flex-direction: column; }
.picker { display: flex; align-items: center; height: 34px; }
.picker > svg { width: 56px; height: 28px; }
.grow-label { margin-left: auto; margin-right: 5px; color: #b0b0b0; }
.op { width: 29px; }
.recent { display: flex; align-items: center; height: 14px; color: #b0b0b0; }
.recent span { width: 29px; }
.recent i, .basic i { width: 8px; height: 8px; }
.recent b { width: 48px; height: 8px; background: #292929; }
.k-grey { background: #e4e4e4; }
.k-cyan { background: #7fd4ee; }
.k-pale { background: #d9f3fb; }
.k-blue { background: #2c3cb0; }
.palette { display: flex; align-items: center; height: 16px; gap: 6px; }
.palette-pick { flex: 1; display: flex; align-items: center; background: #424242; height: 12px; padding-left: 7px; }
.palette-pick svg { width: 8px; height: 10px; }
.palette-pick select { flex: 1; }
.views { width: 22px; height: 10px; margin-right: 3px; }
.basic { display: flex; }
.k-none { background: linear-gradient(135deg, #eee 45%, #c88 45%, #c88 55%, #eee 55%); }
.k-black { background: #000; }
.k-mid { background: #828282; }
.k-white { background: #fff; }
.names { padding: 2px 0 0 5px; color: #c9c9c9; }
.names li { display: flex; align-items: center; height: 12px; gap: 4px; }
.names i { width: 8px; height: 8px; }
.n1 { background: linear-gradient(45deg, #fff 18%, #2c3fb3 18%); }
.n2 { background: linear-gradient(45deg, #333 18%, #cdf3fb 18%); }
.n3 { background: linear-gradient(45deg, #fff 18%, #7bd544 18%); }
.n4 { background: linear-gradient(45deg, #333 18%, #fff 18%); }
.n5 { background: linear-gradient(45deg, #fff 18%, #0c2160 18%); }
.search { display: flex; align-items: center; height: 12px; margin: auto 0 0 2px; background: #212121; padding-left: 3px; gap: 3px; }
.search svg { width: 7px; height: 7px; }
.search input { flex: 1; }

.layers-tabs { height: 20px; border-top: 3px solid #161616; padding-top: 1px; }
.layer-opts { display: flex; align-items: center; height: 22px; flex: none; padding: 0 4px 0 3px; color: #b5b5b5; border-bottom: 1px solid #222; }
.layer-opts .dark { width: 27px; padding-left: 2px; margin-left: 2px; }
.layer-opts .pick { flex: 1; margin: 0 4px 0 3px; height: 13px; padding-left: 2px; color: #ccc; }
.layer-opts .ico { width: 12px; height: 12px; }
.ico svg { width: 9px; height: 9px; }
.layers { flex: none; }
.layers li { display: flex; align-items: center; height: 23px; border-bottom: 1px solid #242424; background: #353535; padding-right: 11px; color: #d5d5d5; }
.kind { width: 11px; align-self: stretch; display: flex; flex-direction: column; align-items: center; padding-top: 3px; flex: none; color: #b0b0b0; background: #303030; font-size: 10px; line-height: 10px; }
.kind svg { width: 8px; height: 8px; color: #bbb; stroke: #bbb; flex: none; }
.thumb { width: 22px; height: 100%; background: #292929; padding: 1px 0; flex: none; }
.layers .name { flex: 1; padding-left: 7px; }
.layers i { width: 5px; height: 5px; border-radius: 50%; background: #b5b5b5; }
.layers .parent { background: #28364d; }
.parent .kind { background: #555; }
.layers .selected { background: #32517a; color: #5e82aa; padding-left: 5px; }
.selected .kind, .master .kind { justify-content: center; padding: 0; }
.selected .kind { background: #3d628f; }
.selected .thumb { background: #20252e; }
.layers .master { color: #686868; }
.master .thumb { border-left: 2px solid #3aa688; }
.layer-space { flex: 1; background: #1f1f1f; min-height: 20px; }
.layer-bar { display: flex; align-items: center; height: 20px; flex: none; padding: 0 3px; gap: 2px; }
.layer-bar button { width: 12px; height: 12px; }
.layer-bar svg { width: 10px; height: 10px; }
.push { flex: 1; }
.layer-bar .fx { font: italic 700 10px/12px Roboto, sans-serif; color: #ccc; }
.layer-bar .add { margin-left: 44px; }

.transform-tabs { height: 19px; border-top: 2px solid #181818; padding-top: 1px; }
.transform { position: relative; display: flex; align-items: flex-start; flex: none; height: 75px; padding: 9px 6px 0 9px; }
.anchor { width: 28px; height: 30px; margin-top: 5px; }
.coords { display: grid; grid-template-columns: 14px 38px 16px 37px; grid-auto-rows: 12px; row-gap: 3px; column-gap: 1px; align-items: center; margin-left: 5px; }
.coords label { text-align: right; padding-right: 3px; }
.coords input { width: 100%; height: 12px; background: #212121; padding-left: 2px; color: #ddd; }
.lock { width: 6px; height: 14px; margin: 5px 0 0 5px; }
.cycle { position: absolute; left: 130px; top: 57px; width: 20px; height: 10px; }
.watermark { position: absolute; left: 9px; top: 26px; font: italic 40px/48px "Liberation Serif", serif; color: rgba(175, 175, 175, .5); white-space: nowrap; pointer-events: none; }

.status { display: flex; align-items: center; height: 14px; flex: none; background: #383838; color: #aaa; padding-left: 6px; }
.nav { width: 12px; color: #ccc; }
.dimmed { color: #555; }
.pages { width: 58px; height: 14px; background: #262626; color: #ccc; }
.st { width: 9px; height: 9px; margin-left: 1px; }
.ok { margin: 0 8px 0 16px; }
.status b { color: #fff; }
```

FILE: rulers.js
```js
const NS = "http://www.w3.org/2000/svg";
const PX_PER_MM = 709 / 420;

function add(parent, name, attrs, text) {
  const el = document.createElementNS(NS, name);
  for (const key in attrs) el.setAttribute(key, attrs[key]);
  if (text !== undefined) el.textContent = text;
  parent.appendChild(el);
}

const horizontal = document.getElementById("rulerH");
for (let mm = -14; mm <= 434; mm += 2) {
  const x = Math.round(39 + mm * PX_PER_MM) + 0.5;
  const length = mm % 20 === 0 ? 5 : mm % 10 === 0 ? 4 : 2;
  add(horizontal, "path", { class: "tick", d: `M${x} ${13 - length}v${length}` });
  if (mm % 20 === 0) add(horizontal, "text", { x, y: 7, "text-anchor": "middle" }, mm);
}
add(horizontal, "path", { class: "marker", d: "M303.5 1v12" });

const vertical = document.getElementById("rulerV");
for (let mm = -22; mm <= 320; mm += 2) {
  const y = Math.round(40 + mm * PX_PER_MM) + 0.5;
  const length = mm % 20 === 0 ? 5 : mm % 10 === 0 ? 4 : 2;
  add(vertical, "path", { class: "tick", d: `M${14 - length} ${y}h${length}` });
  if (mm % 20 === 0) add(vertical, "text", { transform: `translate(7 ${y}) rotate(-90)`, "text-anchor": "middle" }, mm);
}
add(vertical, "path", { class: "marker", d: "M1 420.5h13" });
```
